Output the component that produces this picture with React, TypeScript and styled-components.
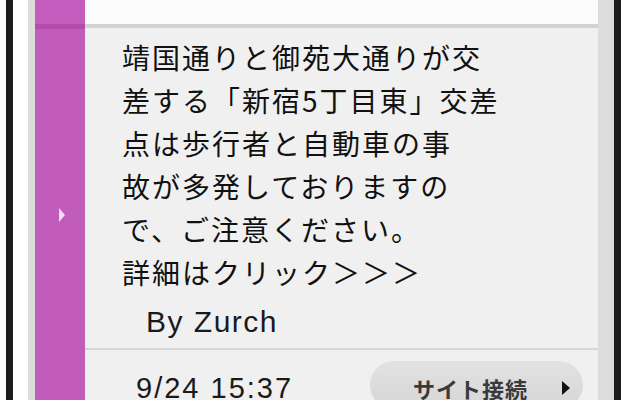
import React from 'react';
import styled, { createGlobalStyle } from 'styled-components';

const GlobalStyle = createGlobalStyle`
  html, body {
    margin: 0;
    padding: 0;
    background: #ffffff;
  }
  body {
    font-family: 'Noto Sans CJK JP', 'Noto Sans', sans-serif;
  }
`;

const Screen = styled.div`
  width: 640px;
  height: 400px;
  overflow: hidden;
  display: flex;
  background: #ffffff;
`;

const Margin = styled.div<{ $w: number }>`
  width: ${(p) => p.$w}px;
  flex-shrink: 0;
  background: #ffffff;
`;

const FrameLine = styled.div<{ $w: number }>`
  width: ${(p) => p.$w}px;
  flex-shrink: 0;
  background: #1c1c1c;
`;

const Rail = styled.div<{ $w: number }>`
  width: ${(p) => p.$w}px;
  flex-shrink: 0;
  background: #dcdcdc;
`;

const SideTab = styled.div`
  width: 50px;
  flex-shrink: 0;
  display: flex;
  flex-direction: column;
  background: #c15cbb;
  .tab-head {
    height: 24px;
    background: #c45dbd;
    border-bottom: 5px solid #b04ea9;
  }
  .tab-body {
    flex: 1;
    display: flex;
    justify-content: center;
    padding-top: 179px;
    padding-left: 4px;
  }
`;

const TabArrow = styled.span`
  width: 0;
  height: 0;
  border-top: 7px solid transparent;
  border-bottom: 7px solid transparent;
  border-left: 6px solid #f6dcf3;
`;

const Card = styled.div`
  flex: 1;
  display: flex;
  flex-direction: column;
  background: #f0f0f0;
`;

const CardHead = styled.div`
  height: 24px;
  flex-shrink: 0;
  background: #fcfcfc;
  border-bottom: 4px solid #d2d2d2;
`;

const Message = styled.div`
  padding: 8px 0 0 37px;
  font-size: 28px;
  line-height: 43px;
  letter-spacing: 2px;
  color: #111111;
`;

const Author = styled.div`
  padding: 8px 0 6px 61px;
  font-family: 'Liberation Sans', 'Noto Sans CJK JP', sans-serif;
  font-size: 30px;
  line-height: 40px;
  letter-spacing: 1.5px;
  color: #1a1a1a;
  border-bottom: 2px solid #d6d6d6;
`;

const Footer = styled.div`
  display: flex;
  align-items: flex-start;
  justify-content: space-between;
  padding: 11px 15px 0 51px;
`;

const Stamp = styled.span`
  font-family: 'Liberation Sans', sans-serif;
  font-size: 29px;
  line-height: 46px;
  padding-top: 4px;
  letter-spacing: 2px;
  color: #1a1a1a;
`;

const LinkButton = styled.div`
  width: 213px;
  height: 48px;
  margin-left: auto;
  border-radius: 24px;
  background: linear-gradient(#e2e2e2, #d6d6d6);
  display: flex;
  align-items: center;
  justify-content: flex-end;
  gap: 34px;
  padding-right: 13px;
  box-sizing: border-box;
  font-size: 22px;
  font-weight: 700;
  letter-spacing: 1px;
  color: #3a3a3a;
  padding-top: 6px;
`;

const PlayMark = styled.span`
  width: 0;
  height: 0;
  border-top: 7px solid transparent;
  border-bottom: 7px solid transparent;
  border-left: 8px solid #111111;
`;

const App = () => {
  return (
    <Screen>
      <GlobalStyle />
      <Margin $w={6} />
      <FrameLine $w={7} />
      <Margin $w={15} />
      <Rail $w={7} />
      <SideTab>
        <div className="tab-head" />
        <div className="tab-body">
          <TabArrow />
        </div>
      </SideTab>
      <Card>
        <CardHead />
        <Message>
          靖国通りと御苑大通りが交
          <br />
          差する「新宿5丁目東」交差
          <br />
          点は歩行者と自動車の事
          <br />
          故が多発しておりますの
          <br />
          で、ご注意ください。
          <br />
          詳細はクリック＞＞＞
        </Message>
        <Author>By Zurch</Author>
        <Footer>
          <Stamp>9/24 15:37</Stamp>
          <LinkButton>
            <span>サイト接続</span>
            <PlayMark />
          </LinkButton>
        </Footer>
      </Card>
      <Rail $w={16} />
      <FrameLine $w={7} />
      <Margin $w={19} />
    </Screen>
  );
};

export default App;
